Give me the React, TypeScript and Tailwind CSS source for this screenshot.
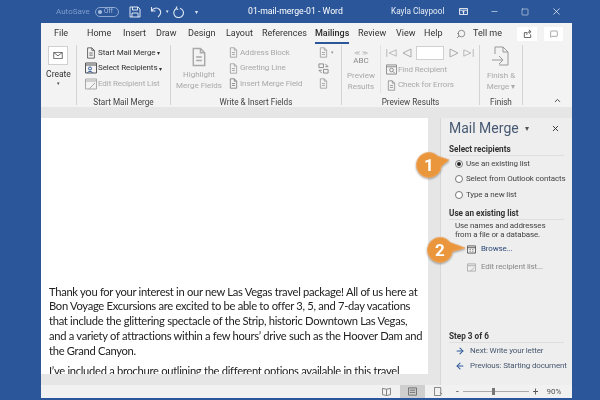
import { ArrowLeft, ArrowRight, ChevronUp, Minus, MessageSquare, Search, Square, X } from "lucide-react"

function Doc({ className = "" }: { className?: string }) {
  return (
    <svg viewBox="0 0 12 14" className={className} fill="none" stroke="currentColor" strokeWidth="1">
      <path d="M2 1h5l3 3v9H2z" />
      <path d="M7 1v3h3M4 7h4M4 9.5h4" />
    </svg>
  )
}

function GroupLabel({ children }: { children: string }) {
  return (
    <div className="absolute -bottom-[3px] left-0 right-0 text-center text-[8.2px] leading-[12px] whitespace-nowrap text-[#444]">
      {children}
    </div>
  )
}

function SmallRow({
  icon,
  label,
  dim,
  caret,
}: {
  icon: React.ReactNode
  label: string
  dim?: boolean
  caret?: boolean
}) {
  return (
    <div className={`flex h-[15.5px] items-center gap-[1px] whitespace-nowrap text-[8px] tracking-[-0.1px] ${dim ? "text-[#a9a9a9]" : "text-[#333]"}`}>
      {icon}
      <span>{label}</span>
      {caret ? <span className="ml-[1px] text-[6px]">▾</span> : null}
    </div>
  )
}

function Radio({ on, label }: { on?: boolean; label: string }) {
  return (
    <div className="flex h-[15.5px] items-center gap-[3px] pl-[14px] text-[8px] tracking-[-0.15px] whitespace-nowrap text-[#444]">
      <span className="flex size-[8px] shrink-0 items-center justify-center rounded-full border border-[#777] bg-white">
        {on ? <span className="size-[4px] rounded-full bg-[#222]" /> : null}
      </span>
      <span>{label}</span>
    </div>
  )
}

function Badge({ n, d, className }: { n: string; d: string; className: string }) {
  return (
    <div className={`absolute h-[28px] w-[42px] drop-shadow-[0_1px_1px_rgba(0,0,0,0.35)] ${className}`}>
      <svg viewBox="0 0 42 28" className="absolute inset-0 size-full">
        <path d={d} fill="#e9963c" stroke="#efa862" strokeWidth="1" />
      </svg>
      <span className="absolute left-0 top-0 w-[28px] text-center text-[17px] font-bold leading-[28px] text-white">
        {n}
      </span>
    </div>
  )
}

export default function App() {
  return (
    <div className="relative flex h-[400px] w-[600px] flex-col overflow-hidden bg-[#2b579a] blur-[0.3px] [font-family:Roboto,sans-serif]">
      {/* title bar */}
      <div className="relative flex h-[23px] items-center whitespace-nowrap text-[8.7px] text-white">
        <span className="ml-[56px] w-[34px] text-[8px] text-[#7f9ccb]">AutoSave</span>
        <span className="ml-[5px] flex h-[10px] w-[24px] items-center gap-[2px] rounded-full border border-[#8ba6d0] pl-[2px] text-[6.5px] text-[#a9bedd]">
          <span className="size-[4px] rounded-full bg-[#a9bedd]" />
          Off
        </span>
        <svg viewBox="0 0 12 12" className="ml-[10px] size-[12px]" fill="none" stroke="#dfe7f3" strokeWidth="1">
          <path d="M1 1h8l2 2v8H1zM3.500 1v3h5V1M3 11V7h6v4" />
        </svg>
        <svg viewBox="0 0 12 12" className="ml-[9px] size-[12px]" fill="none" stroke="#dfe7f3" strokeWidth="1.1">
          <path d="M1.500 1v4h4M1.700 5C3 2 7 1 9.500 3.500c2 2 1.500 5-1.500 7.500" />
        </svg>
        <span className="w-[10px] text-center text-[5px] text-[#dfe7f3]">▾</span>
        <svg viewBox="0 0 12 12" className="size-[12px]" fill="none" stroke="#dfe7f3" strokeWidth="1.1">
          <path d="M4.500 2.500A4.800 4.800 0 1 0 8 2.200M5 0.500l-1 2.200 2.300 .8" />
        </svg>
        <span className="ml-[11px] w-[5px] text-[6px] text-[#dfe7f3]">▾</span>
        <span className="ml-[48px] w-[93px] text-center">01-mail-merge-01 - Word</span>
        <span className="ml-[50px] w-[52px] text-[8.2px] text-[#e6ecf6]">Kayla Claypool</span>
        <svg viewBox="0 0 10 8" className="ml-[16px] h-[7px] w-[9px]" fill="none" stroke="#fff" strokeWidth="1">
          <path d="M.5 .5h9v7h-9zM.5 2.500h9" />
          <path d="M5 7V3.500M3.500 5L5 3.500 6.500 5" />
        </svg>
        <Minus className="ml-[22px] size-[9px] text-white" strokeWidth={1.5} />
        <Square className="ml-[22px] size-[8px] text-white" strokeWidth={1.5} />
        <X className="ml-[22px] size-[11px] text-white" strokeWidth={1.5} />
      </div>

      {/* window */}
      <div className="ml-[41px] flex h-[375px] w-[531px] flex-col bg-[#f3f3f3]">
        {/* tabs */}
        <div className="flex h-[21px] items-center whitespace-nowrap text-[9px] text-[#333]">
          <span className="ml-[13px] w-[13px]">File</span>
          <span className="ml-[20px] w-[24px]">Home</span>
          <span className="ml-[12px] w-[21px]">Insert</span>
          <span className="ml-[12px] w-[21px]">Draw</span>
          <span className="ml-[11px] w-[27px]">Design</span>
          <span className="ml-[11px] w-[26px]">Layout</span>
          <span className="ml-[10px] w-[44px]">References</span>
          <span className="relative ml-[9px] w-[34px] font-medium text-[#2b2b2b]">
            Mailings
            <span className="absolute -bottom-[4px] left-0 right-0 h-[2px] bg-[#2b579a]" />
          </span>
          <span className="ml-[9px] w-[29px]">Review</span>
          <span className="ml-[9px] w-[19px]">View</span>
          <span className="ml-[9px] w-[19px]">Help</span>
          <Search className="ml-[13px] size-[10px] -scale-x-100 text-[#555]" strokeWidth={1.5} />
          <span className="ml-[7px] w-[30px]">Tell me</span>
          <span className="ml-[14px] flex h-[14px] w-[20px] items-center justify-center bg-white">
            <svg viewBox="0 0 10 10" className="size-[9px]" fill="none" stroke="#555" strokeWidth="1">
              <path d="M1.500 9.500V4h3M1.500 9.500h7V6M4 6.500C4.500 4 6 3 8 3M6.500 1L9 3 6.500 5" />
            </svg>
          </span>
          <span className="ml-[7px] flex h-[14px] w-[19px] items-center justify-center bg-white">
            <MessageSquare className="size-[8px] text-[#555]" strokeWidth={1.5} />
          </span>
        </div>

        {/* ribbon */}
        <div className="flex h-[63px] pt-[1px]">
          <div className="relative h-[60px] w-[36px] border-r border-[#d4d4d4]">
            <div className="ml-[7px] mt-[1px] flex h-[19px] w-[20px] items-center justify-center border border-[#d0d0d0] bg-white">
              <svg viewBox="0 0 12 9" className="h-[7px] w-[10px]" fill="none" stroke="#444" strokeWidth="1">
                <path d="M.5 .5h11v8H.5zM.5 .5L6 5l5.500-4.500" />
              </svg>
            </div>
            <div className="mt-[3px] text-center text-[8.5px] leading-[12px] text-[#333]">Create</div>
            <div className="text-center text-[5px] leading-[6px] text-[#444]">▾</div>
          </div>

          <div className="relative h-[60px] w-[94px] border-r border-[#d4d4d4] pl-[8px]">
            <SmallRow
              caret
              label="Start Mail Merge"
              icon={<Doc className="size-[12px] text-[#555]" />}
            />
            <SmallRow
              caret
              label="Select Recipients"
              icon={
                <svg viewBox="0 0 12 12" className="size-[12px]" fill="none" stroke="#555" strokeWidth="1">
                  <path d="M.5 1h11v10H.5zM.5 3h11" />
                  <circle cx="5" cy="6.500" r="1.500" stroke="#2b579a" />
                  <path d="M2.500 11c0-2 5-2 5 0" stroke="#2b579a" />
                </svg>
              }
            />
            <SmallRow
              dim
              label="Edit Recipient List"
              icon={
                <svg viewBox="0 0 12 12" className="size-[12px]" fill="none" stroke="#a9a9a9" strokeWidth="1">
                  <path d="M.5 1h11v10H.5zM.5 3h11M4 11l6-6" />
                </svg>
              }
            />
            <GroupLabel>Start Mail Merge</GroupLabel>
          </div>

          <div className="relative flex h-[60px] w-[171px] border-r border-[#d4d4d4]">
            <div className="w-[52px] shrink-0 whitespace-nowrap pl-[4px] text-center text-[8px] leading-[10.5px] text-[#a9a9a9]">
              <Doc className="mx-auto mt-[2px] h-[20px] w-[18px]" />
              <div className="mt-[3px]">Highlight</div>
              <div>Merge Fields</div>
            </div>
            <div className="ml-[5px]">
              <SmallRow dim label="Address Block" icon={<Doc className="size-[11px] text-[#999]" />} />
              <SmallRow dim label="Greeting Line" icon={<Doc className="size-[11px] text-[#999]" />} />
              <SmallRow dim label="Insert Merge Field" icon={<Doc className="size-[11px] text-[#777]" />} />
            </div>
            <div className="absolute left-[147px] top-0 text-[#999]">
              <div className="flex h-[15.5px] items-center gap-[2px]">
                <Doc className="size-[11px]" />
                <span className="text-[5px]">▾</span>
              </div>
              <div className="flex h-[15.5px] items-center">
                <svg viewBox="0 0 12 12" className="size-[11px]" fill="none" stroke="#888" strokeWidth="1">
                  <path d="M1 1h5v4H1zM6 7h5v4H6zM8 1l3 3-3 0M4 11L1 8h3" />
                </svg>
              </div>
              <div className="flex h-[15.5px] items-center">
                <Doc className="size-[11px]" />
              </div>
            </div>
            <GroupLabel>Write & Insert Fields</GroupLabel>
          </div>

          <div className="relative flex h-[60px] w-[138px] border-r border-[#d4d4d4]">
            <div className="h-[48px] w-[39px] shrink-0 border-r border-[#e2e2e2] text-center text-[8px] leading-[10.5px] text-[#a9a9a9]">
              <div className="mt-[4px] text-[6px] leading-[7px]">≪ ≫</div>
              <div className="text-[8px] leading-[9px] text-[#888]">ABC</div>
              <div className="mt-[6px]">Preview</div>
              <div>Results</div>
            </div>
            <div className="ml-[5px]">
              <div className="flex h-[16px] items-center text-[#aaa]">
                <svg viewBox="0 0 14 10" className="h-[10px] w-[11px]" fill="none" stroke="currentColor"><path d="M1 0v10M13 1L4 5l9 4z" /></svg>
                <svg viewBox="0 0 10 10" className="ml-[5px] size-[10px]" fill="none" stroke="currentColor"><path d="M9 1L1 5l8 4z" /></svg>
                <span className="ml-[4px] h-[14px] w-[28px] border border-[#d0d0d0] bg-white" />
                <svg viewBox="0 0 10 10" className="ml-[5px] size-[10px]" fill="none" stroke="currentColor"><path d="M1 1l8 4-8 4z" /></svg>
                <svg viewBox="0 0 14 10" className="ml-[4px] h-[10px] w-[11px]" fill="none" stroke="currentColor"><path d="M13 0v10M1 1l9 4-9 4z" /></svg>
              </div>
              <div className="mt-[1px]">
                <SmallRow
                  dim
                  label="Find Recipient"
                  icon={
                    <svg viewBox="0 0 12 12" className="size-[11px]" fill="none" stroke="#888" strokeWidth="1">
                      <path d="M.5 1h11v10H.5zM.5 3h11" />
                      <circle cx="6" cy="6.500" r="2" />
                      <path d="M7.500 8L9.500 10" />
                    </svg>
                  }
                />
                <SmallRow dim label="Check for Errors" icon={<Doc className="size-[11px] text-[#888]" />} />
              </div>
            </div>
            <GroupLabel>Preview Results</GroupLabel>
          </div>

          <div className="relative h-[60px] w-[43px] whitespace-nowrap border-r border-[#d4d4d4] text-center text-[8px] leading-[10.5px] text-[#a9a9a9]">
            <svg viewBox="0 0 20 21" className="mx-auto mt-[1px] h-[21px] w-[20px]" fill="none" stroke="#999" strokeWidth="1">
              <path d="M4 8V1h8l5 5v13H8" />
              <path d="M12 1v5h5" />
              <path d="M1 14h11M8 10l4 4-4 4" />
            </svg>
            <div className="mt-[4px]">Finish &</div>
            <div>Merge ▾</div>
            <GroupLabel>Finish</GroupLabel>
          </div>
          <div className="flex h-[60px] flex-1 items-end justify-end pr-[10px] -mb-[1px]">
            <ChevronUp className="size-[9px] text-[#444]" strokeWidth={2.5} />
          </div>
        </div>

        <div className="h-[11px] bg-[#e6e6e6]" />

        {/* body */}
        <div className="flex flex-1">
          <div className="flex w-[399px] flex-col bg-[#e6e6e6]">
            <div className="flex h-[256px] w-[387px] flex-col justify-end overflow-hidden whitespace-nowrap bg-white pl-[8px] text-[11.2px] leading-[14.7px] tracking-[-0.3px] text-[#222] [font-family:Lato,sans-serif]">
              <p>
                Thank you for your interest in our new Las Vegas travel package! All of us here at
                <br />
                Bon Voyage Excursions are excited to be able to offer 3, 5, and 7-day vacations
                <br />
                that include the glittering spectacle of the Strip, historic Downtown Las Vegas,
                <br />
                and a variety of attractions within a few hours’ drive such as the Hoover Dam and
                <br />
                the Grand Canyon.
              </p>
              <p className="mt-[6px] -mb-[5px]">
                I’ve included a brochure outlining the different options available in this travel
              </p>
            </div>
          </div>

          <div className="flex w-[132px] flex-col border-l border-[#d8d8d8] bg-[#eeeeee] whitespace-nowrap text-[#444]">
            <div className="flex h-[21px] items-center pl-[8px]">
              <span className="w-[69px] text-[14px] text-[#475a73]">Mail Merge</span>
              <span className="ml-[7px] w-[8px] text-[8px] text-[#555]">▾</span>
              <X className="ml-[18px] size-[9px] shrink-0 text-[#333]" strokeWidth={2.5} />
            </div>
            <div className="mx-[8px] mt-[5px] border-b border-[#dedede] text-[8.2px] leading-[11px] font-bold text-[#333]">
              Select recipients
            </div>
            <Radio on label="Use an existing list" />
            <Radio label="Select from Outlook contacts" />
            <Radio label="Type a new list" />
            <div className="mx-[8px] mt-[5px] border-b border-[#dedede] text-[8.2px] leading-[11px] font-bold text-[#333]">
              Use an existing list
            </div>
            <div className="ml-[14px] mt-[1px] text-[8px] leading-[9.5px] tracking-[-0.15px]">
              Use names and addresses
              <br />
              from a file or a database.
            </div>
            <div className="mt-[0.5px] flex h-[18px] items-center pl-[26px] text-[8px] tracking-[-0.15px] text-[#2f4a78]">
              <svg viewBox="0 0 10 10" className="size-[9px] shrink-0" fill="none" stroke="#555" strokeWidth="1">
                <path d="M.5 1h9v8h-9zM.5 3h9M3 5h1M6 5h1M3 7h1M6 7h1" />
              </svg>
              <span className="ml-[5px]">Browse...</span>
            </div>
            <div className="flex h-[18px] items-center pl-[26px] text-[8px] tracking-[-0.15px] text-[#888]">
              <svg viewBox="0 0 10 10" className="size-[9px] shrink-0" fill="none" stroke="#aaa" strokeWidth="1">
                <path d="M.5 1h9v8h-9zM.5 3h9M4 9l4-4" />
              </svg>
              <span className="ml-[5px]">Edit recipient list...</span>
            </div>
            <div className="mx-[8px] mt-auto mb-[1px] border-b border-[#dedede] text-[8.2px] leading-[11px] font-bold text-[#333]">
              Step 3 of 6
            </div>
            <div className="flex h-[15px] items-center pl-[14px] text-[8px] tracking-[-0.15px] text-[#47586f]">
              <ArrowRight className="size-[10px] shrink-0 text-[#2b579a]" strokeWidth={2.5} />
              <span className="ml-[5px]">Next: Write your letter</span>
            </div>
            <div className="mb-[11.5px] flex h-[15px] items-center pl-[14px] text-[8px] tracking-[-0.15px] text-[#47586f]">
              <ArrowLeft className="size-[10px] shrink-0 text-[#2b579a]" strokeWidth={2.5} />
              <span className="ml-[5px]">Previous: Starting document</span>
            </div>
          </div>
        </div>

        {/* status bar */}
        <div className="flex h-[13px] items-center bg-[#f1f1f1] text-[8px] text-[#555]">
          <svg viewBox="0 0 10 10" className="ml-[341px] size-[9px]" fill="none" stroke="#777" strokeWidth="1">
            <path d="M.5 1.500L5 2.500l4.500-1v7L5 9.500l-4.500-1zM5 2.500v7" />
          </svg>
          <span className="ml-[9px] flex h-[13px] w-[25px] items-center justify-center bg-[#cfcfcf]">
            <svg viewBox="0 0 10 10" className="size-[9px]" fill="none" stroke="#666" strokeWidth="1">
              <path d="M.5 1h9v8h-9zM2 3.500h6M2 6h6" />
            </svg>
          </span>
          <svg viewBox="0 0 10 10" className="ml-[9px] size-[9px]" fill="none" stroke="#777" strokeWidth="1">
            <path d="M.5 .5h7v9h-7zM7 6l2 2" />
          </svg>
          <span className="ml-[13px] text-[10px] leading-none">-</span>
          <span className="relative ml-[4px] h-px w-[66px] bg-[#aaa]">
            <span className="absolute left-[29px] -top-[3px] h-[7px] w-[3px] bg-[#777]" />
          </span>
          <span className="ml-[4px] text-[10px] leading-none">+</span>
          <span className="ml-[8px]">90%</span>
        </div>
      </div>

      <Badge
        n="1"
        d="M14 1.500A12.500 12.500 0 0 1 23 5.300L34 9 26.400 15A12.500 12.500 0 1 1 14 1.500z"
        className="left-[415px] top-[151px]"
      />
      <Badge
        n="2"
        d="M14 1.500A12.500 12.500 0 0 1 24 6.500L39 12 26.400 15.500A12.500 12.500 0 1 1 14 1.500z"
        className="left-[426px] top-[236px]"
      />
    </div>
  )
}
